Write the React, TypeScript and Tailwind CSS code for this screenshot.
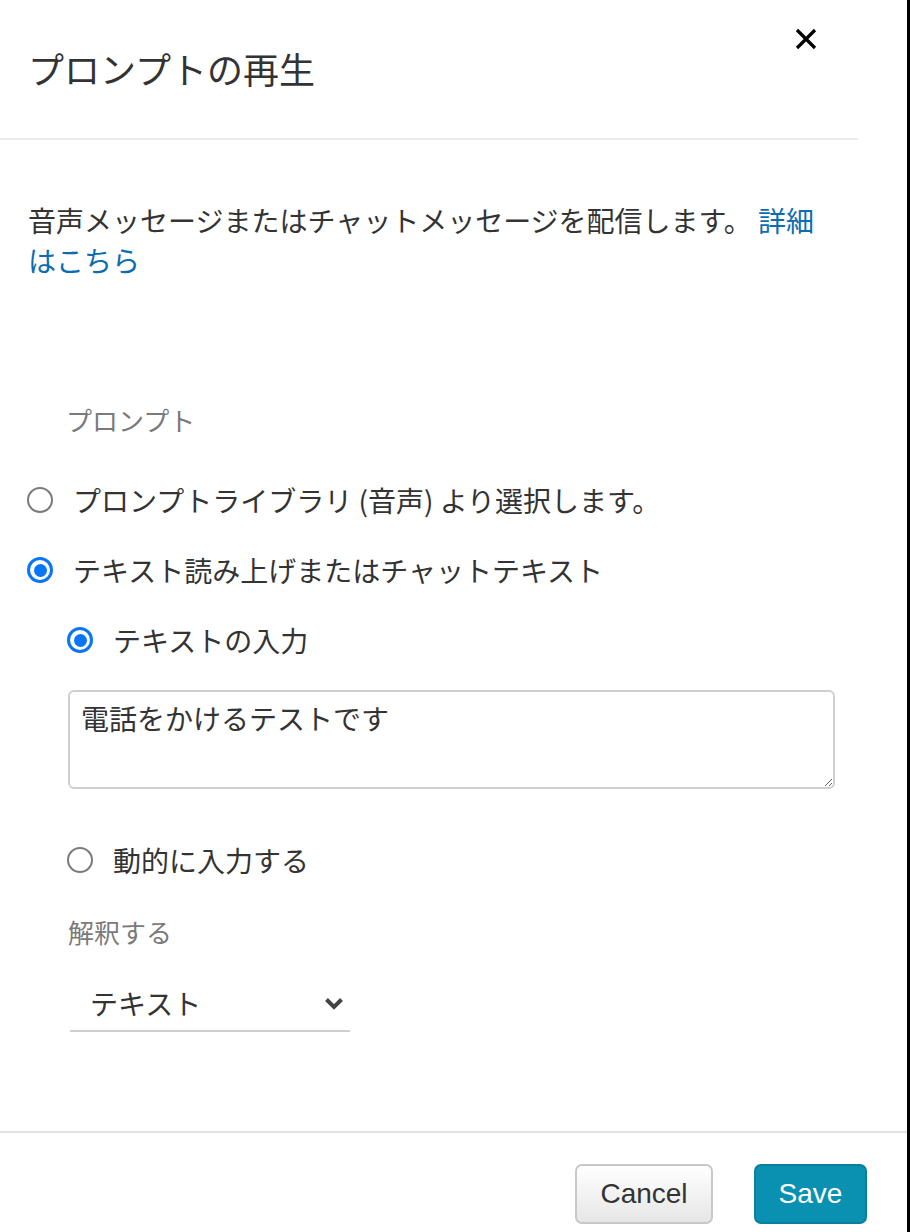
import { useState } from "react"

const jp = { fontFamily: '"Noto Sans CJK JP", "Noto Sans", sans-serif' }

const Radio = ({ checked, label, onClick }: { checked: boolean; label: string; onClick: () => void }) => {
    return (
        <div className="flex items-center h-[40px] gap-[20px] cursor-pointer" onClick={onClick}>
            {checked ? (
                <span className="w-[26px] h-[26px] rounded-full border-[3px] border-[#0a76f6] flex items-center justify-center shrink-0">
                    <span className="w-[13px] h-[13px] rounded-full bg-[#0a76f6]" />
                </span>
            ) : (
                <span className="w-[26px] h-[26px] rounded-full border-2 border-[#7a7a7a] shrink-0" />
            )}
            <span className="text-[28px] leading-[40px] text-[#333]">{label}</span>
        </div>
    )
}

const App = () => {
    const [source, setSource] = useState<'library' | 'tts'>('tts')
    const [mode, setMode] = useState<'text' | 'dynamic'>('text')
    const [text, setText] = useState<string>('電話をかけるテストです')

    return (
        <div className="flex w-[910px] h-[1232px] bg-white" style={jp}>
            <div className="flex flex-col flex-1">
                {/* header */}
                <div className="flex items-start justify-between w-[858px] h-[140px] border-b-2 border-[#ececec]">
                    <h1 className="mt-[43px] ml-[28px] text-[36px] leading-[50px] text-[#333] font-normal">プロンプトの再生</h1>
                    <button className="mt-[28px] mr-[41px] w-[22px] h-[22px] cursor-pointer">
                        <svg viewBox="0 0 22 22" width="22" height="22">
                            <path d="M2 2 L20 20 M20 2 L2 20" stroke="#000" strokeWidth="3.2" />
                        </svg>
                    </button>
                </div>

                {/* body */}
                <div className="flex flex-col pl-[27px]">
                    <p className="mt-[60px] ml-[1px] w-[812px] text-[28px] leading-[40px] text-[#333]">
                        音声メッセージまたはチャットメッセージを配信します。 <a className="text-[#0b6cb0] cursor-pointer">詳細はこちら</a>
                    </p>

                    <div className="mt-[122px] ml-[39px] text-[26px] leading-[36px] text-[#7a7a7a]">プロンプト</div>

                    <div className="flex flex-col gap-[30px] mt-[42px]">
                        <Radio checked={source === 'library'} label="プロンプトライブラリ (音声) より選択します。" onClick={() => setSource('library')} />
                        <Radio checked={source === 'tts'} label="テキスト読み上げまたはチャットテキスト" onClick={() => setSource('tts')} />
                    </div>

                    <div className="flex flex-col ml-[40px] mt-[30px]">
                        <Radio checked={mode === 'text'} label="テキストの入力" onClick={() => setMode('text')} />
                        <textarea
                            className="mt-[30px] ml-[1px] w-[767px] h-[99px] border-2 border-[#cfcfcf] rounded-[6px] pl-[11px] pt-[6px] text-[28px] leading-[40px] text-[#333] outline-none"
                            value={text}
                            onChange={(e) => setText(e.target.value)}
                        />
                        <div className="mt-[51px]">
                            <Radio checked={mode === 'dynamic'} label="動的に入力する" onClick={() => setMode('dynamic')} />
                        </div>
                        <div className="mt-[34px] ml-[1px] text-[26px] leading-[36px] text-[#7a7a7a]">解釈する</div>
                        <div className="mt-[26px] ml-[3px] w-[280px] h-[56px] border-b-2 border-[#cfcfcf] flex items-center justify-between pl-[20px] pr-[6px] cursor-pointer">
                            <span className="text-[28px] leading-[40px] text-[#333]">テキスト</span>
                            <svg viewBox="0 0 20 13" width="20" height="13">
                                <path d="M2.5 2.5 L10 10 L17.5 2.5" fill="none" stroke="#444" strokeWidth="4" />
                            </svg>
                        </div>
                    </div>
                </div>

                {/* footer */}
                <div className="mt-auto h-[101px] border-t-2 border-[#e2e2e2] flex justify-end items-start gap-[41px] pt-[31px] pr-[40px]" style={{ fontFamily: '"Liberation Sans", Arial, sans-serif' }}>
                    <button className="w-[138px] h-[60px] rounded-[7px] border-2 border-[#c8c8c8] bg-gradient-to-b from-white to-[#e6e6e6] text-[28px] text-[#333] cursor-pointer">Cancel</button>
                    <button className="w-[113px] h-[60px] rounded-[7px] border-2 border-[#0a7f9c] bg-[#0a91b1] text-[28px] text-white cursor-pointer">Save</button>
                </div>
            </div>
            <div className="w-[3px] bg-black" />
        </div>
    )
}

export default App
